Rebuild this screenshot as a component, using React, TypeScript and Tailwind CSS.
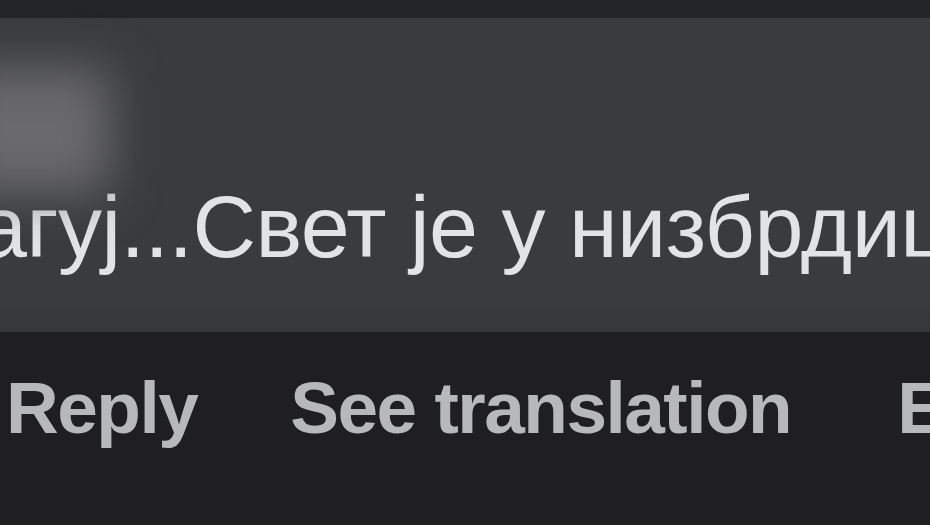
export default function App() {
  return (
    <div
      className="w-[930px] h-[525px] overflow-hidden bg-[#1f1f22] flex flex-col"
      style={{ fontFamily: "'Liberation Sans', Arial, sans-serif" }}
    >
      <div className="h-[18px] shrink-0 bg-[#242528]" />

      {/* comment bubble */}
      <div className="relative h-[314px] shrink-0 bg-[#3a3b3d] flex flex-col">
        {/* blurred author name */}
        <div className="absolute left-[-50px] top-[50px] w-[160px] h-[125px] bg-[#6a6a6c] blur-[24px]" />

        <div className="pt-[159px] h-[289px] overflow-hidden">
          <p className="ml-[-22px] whitespace-nowrap text-[88px] leading-[100px] tracking-[-0.5px] text-[#e2e3e6]">
            агуј...Свет је у низбрдици
          </p>
        </div>
        <div className="h-[25px] bg-[#37383a]" />
      </div>

      {/* actions */}
      <div className="mt-[36px] flex items-start whitespace-nowrap font-bold text-[73px] leading-[80px] tracking-[-1.5px] text-[#b6b8bb]">
        <span className="ml-[6px]">Reply</span>
        <span className="ml-[93px]">See translation</span>
        <span className="ml-[106px]">Edited</span>
      </div>
    </div>
  );
}
